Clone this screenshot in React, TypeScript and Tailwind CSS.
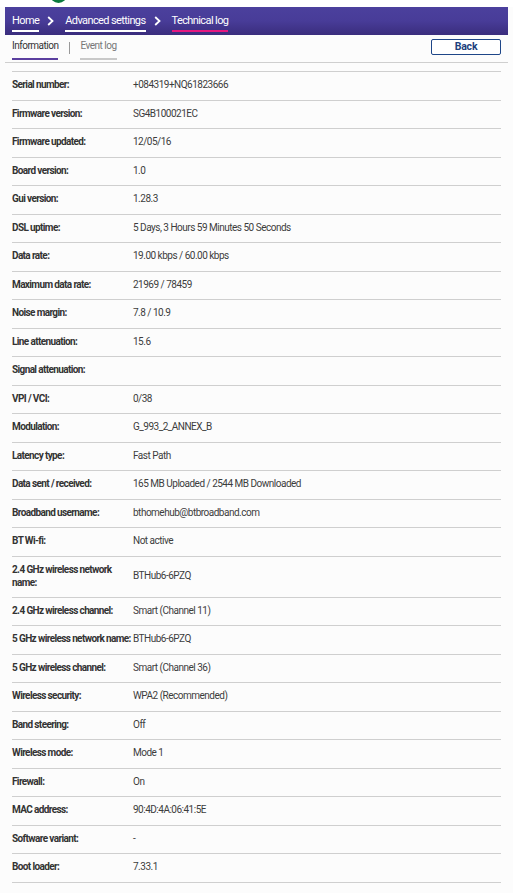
import React from "react";

type Row = { label: string; value: string };

const rows: Row[] = [
  { label: "Serial number:", value: "+084319+NQ61823666" },
  { label: "Firmware version:", value: "SG4B100021EC" },
  { label: "Firmware updated:", value: "12/05/16" },
  { label: "Board version:", value: "1.0" },
  { label: "Gui version:", value: "1.28.3" },
  { label: "DSL uptime:", value: "5 Days, 3 Hours 59 Minutes 50 Seconds" },
  { label: "Data rate:", value: "19.00 kbps / 60.00 kbps" },
  { label: "Maximum data rate:", value: "21969 / 78459" },
  { label: "Noise margin:", value: "7.8 / 10.9" },
  { label: "Line attenuation:", value: "15.6" },
  { label: "Signal attenuation:", value: "" },
  { label: "VPI / VCI:", value: "0/38" },
  { label: "Modulation:", value: "G_993_2_ANNEX_B" },
  { label: "Latency type:", value: "Fast Path" },
  { label: "Data sent / received:", value: "165 MB Uploaded / 2544 MB Downloaded" },
  { label: "Broadband username:", value: "bthomehub@btbroadband.com" },
  { label: "BT Wi-fi:", value: "Not active" },
  { label: "2.4 GHz wireless network\nname:", value: "BTHub6-6PZQ" },
  { label: "2.4 GHz wireless channel:", value: "Smart (Channel 11)" },
  { label: "5 GHz wireless network name:", value: "BTHub6-6PZQ" },
  { label: "5 GHz wireless channel:", value: "Smart (Channel 36)" },
  { label: "Wireless security:", value: "WPA2 (Recommended)" },
  { label: "Band steering:", value: "Off" },
  { label: "Wireless mode:", value: "Mode 1" },
  { label: "Firewall:", value: "On" },
  { label: "MAC address:", value: "90:4D:4A:06:41:5E" },
  { label: "Software variant:", value: "-" },
  { label: "Boot loader:", value: "7.33.1" },
];

function Chevron() {
  return (
    <svg width="7" height="10" viewBox="0 0 7 10" className="ml-[8px] mr-[11px]">
      <path d="M1.2 1 L5.5 5 L1.2 9" fill="none" stroke="#ffffff" strokeWidth="1.8" />
    </svg>
  );
}

function Crumb({ text, line }: { text: string; line: string }) {
  return (
    <span className="relative leading-[14px]">
      {text}
      <span className={`absolute left-0 right-0 bottom-[-4px] h-[2px] ${line}`} />
    </span>
  );
}

export default function App() {
  return (
    <div
      className="min-h-screen bg-[#fcfcfc] text-[#333]"
      style={{ fontFamily: '"Roboto", "Liberation Sans", sans-serif' }}
    >
      {/* logo edge peeking above the header */}
      <div className="h-[7px] bg-white relative overflow-hidden">
        <div className="absolute left-[50px] top-[-14px] w-[17px] h-[17px] rounded-full bg-[#0b7a3e]" />
      </div>

      {/* breadcrumb bar */}
      <div className="mx-[5px] h-[28px] bg-gradient-to-b from-[#4b409d] via-[#483c98] to-[#3a2d7d] flex items-center pl-[7px] text-white text-[11px] tracking-[-0.6px]">
        <Crumb text="Home" line="bg-white" />
        <Chevron />
        <Crumb text="Advanced settings" line="bg-white" />
        <Chevron />
        <Crumb text="Technical log" line="bg-[#e5177f]" />
      </div>

      {/* sub tabs */}
      <div className="mx-[5px] h-[28px] border-b border-[#cfcfcf] flex items-start justify-between px-[7px]">
        <div className="flex items-start text-[10px] tracking-[-0.5px] pt-[4px]">
          <div className="flex flex-col">
            <span className="leading-[13px] text-[#333]">Information</span>
            <span className="mt-[6px] h-[2px] bg-[#5b3f9f]" />
          </div>
          <span className="w-px h-[12px] bg-[#999] ml-[11px] mr-[10px] mt-[3px]" />
          <div className="flex flex-col">
            <span className="leading-[13px] text-[#777]">Event log</span>
            <span className="mt-[6px] h-[2px] bg-[#c9c9c9]" />
          </div>
        </div>
        <button className="mt-[4px] w-[70px] h-[16px] border border-[#1e4688] rounded-[2px] bg-white text-[10.5px] font-bold text-[#1d3f7d] leading-[14px] tracking-[-0.2px]">
          Back
        </button>
      </div>

      {/* information table */}
      <div className="mx-[12px] w-[489px] mt-[8px] border-t border-[#cfcfcf]">
        {rows.map((r) => (
          <div
            key={r.label}
            className="flex items-center min-h-[28.5px] pt-[6px] pb-[8px] border-b border-[#cfcfcf] text-[10px] leading-[13px]"
          >
            <div className="w-[121px] shrink-0 font-bold text-[#333] whitespace-pre tracking-[-0.62px]">
              {r.label}
            </div>
            <div className="text-[#3d3d3d] tracking-[-0.5px]">{r.value}</div>
          </div>
        ))}
      </div>
    </div>
  );
}
